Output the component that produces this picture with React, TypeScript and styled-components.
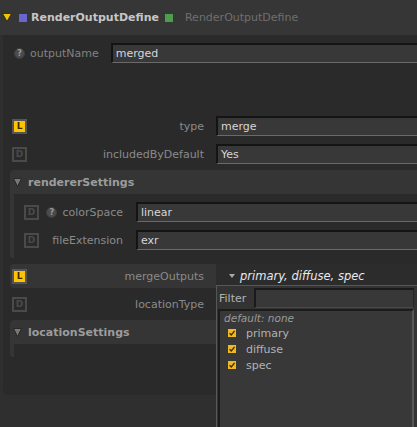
import React from 'react';
import styled, { createGlobalStyle } from 'styled-components';

const GlobalStyle = createGlobalStyle`
  html, body {
    margin: 0;
    padding: 0;
    background: #2f2f2f;
  }
  body {
    font-family: 'DejaVu Sans', Verdana, sans-serif;
    font-size: 11px;
  }
`;

const Root = styled.div`
  position: relative;
  width: 417px;
  height: 427px;
  overflow: hidden;
  background: #2f2f2f;
`;

//-------------------------------- Header -----------------------

const Header = styled.div`
  display: flex;
  align-items: center;
  height: 35px;
  padding-left: 2px;
  box-sizing: border-box;
  background: #363636;
`;

const Square = styled.span<{ $color: string }>`
  width: 8px;
  height: 8px;
  flex-shrink: 0;
  background: ${(p) => p.$color};
`;

const NodeName = styled.span`
  margin: 0 6px 0 4px;
  font-weight: bold;
  color: #c6c6c6;
`;

const NodeType = styled.span`
  margin-left: 12px;
  color: #6f6f6f;
`;

//-------------------------------- Panel -----------------------

const Panel = styled.div`
  height: 360px;
  margin-left: 3px;
  padding-top: 8px;
  box-sizing: border-box;
  background: #2a2a2a;
  border-bottom-left-radius: 4px;
`;

const NameRow = styled.div`
  display: flex;
  align-items: center;
  height: 20px;
  padding-left: 11px;
`;

const Spacer = styled.div`
  height: 51px;
`;

const HelpIcon = styled.span`
  display: flex;
  align-items: center;
  justify-content: center;
  width: 11px;
  height: 11px;
  flex-shrink: 0;
  box-sizing: border-box;
  border: 1px solid #3e3e3e;
  border-radius: 50%;
  background: #4b4b4b;
  color: #9a9a9a;
  font-size: 8px;
  font-weight: bold;
`;

const NameLabel = styled.span`
  margin: 0 12px 0 5px;
  color: #828282;
`;

const Field = styled.div`
  flex: 1;
  height: 20px;
  box-sizing: border-box;
  padding-left: 3px;
  line-height: 17px;
  background: #383838;
  border-top: 2px solid #141414;
  border-left: 2px solid #141414;
  border-bottom: 1px solid #6a6a6a;
  color: #d6d6d6;
  white-space: nowrap;
`;

const ParamRow = styled.div<{ $highlight?: boolean }>`
  display: flex;
  align-items: center;
  height: 24px;
  margin: 0 0 4px 7px;
  padding-left: 2px;
  background: ${(p) => (p.$highlight ? '#353535' : 'transparent')};
  border-radius: 4px 0 0 4px;
`;

const Badge = styled.span<{ $locked?: boolean }>`
  display: flex;
  align-items: center;
  justify-content: center;
  width: 15px;
  height: 15px;
  flex-shrink: 0;
  box-sizing: border-box;
  border: 2px solid ${(p) => (p.$locked ? '#555555' : '#4a4a4a')};
  background: ${(p) => (p.$locked ? '#ffc300' : 'transparent')};
  color: ${(p) => (p.$locked ? '#3a2c00' : '#4a4a4a')};
  font-size: 9px;
  font-weight: bold;
`;

const Label = styled.span`
  width: 177px;
  margin-right: 12px;
  text-align: right;
  color: #8a8a8a;
  white-space: nowrap;
`;

//-------------------------------- Groups -----------------------

const Group = styled.div<{ $gap: number }>`
  margin: 0 0 ${(p) => p.$gap}px 7px;
`;

const GroupHeader = styled.div`
  display: flex;
  align-items: center;
  gap: 6px;
  height: 24px;
  padding-left: 3px;
  background: #353535;
  border-top-left-radius: 4px;
  color: #9c9c9c;
  font-weight: bold;
`;

const GroupBody = styled.div<{ $empty?: boolean }>`
  min-height: ${(p) => (p.$empty ? '13px' : '0')};
  padding: ${(p) => (p.$empty ? '0' : '6px 0 6px 10px')};
  border-left: 4px solid #353535;
  border-bottom-left-radius: 3px;
`;

const GroupRow = styled.div`
  display: flex;
  align-items: center;
  height: 24px;
  & + & {
    margin-top: 4px;
  }
`;

const GroupLabel = styled.span`
  display: flex;
  align-items: center;
  justify-content: flex-end;
  gap: 5px;
  width: 84px;
  margin-right: 13px;
  color: #8a8a8a;
  white-space: nowrap;
`;

//-------------------------------- Dropdown -----------------------

const DropButton = styled.div`
  display: flex;
  align-items: center;
  gap: 5px;
  flex: 1;
  align-self: stretch;
  padding-left: 13px;
  background: #2c2c2c;
  color: #e8e9f0;
  font-size: 11.5px;
  font-style: italic;
  white-space: nowrap;
`;

const Popup = styled.div`
  position: absolute;
  left: 216px;
  top: 285px;
  width: 201px;
  height: 150px;
  box-sizing: border-box;
  padding: 1px 3px 0 1px;
  background: #333333;
  border-top: 1px solid #575757;
  border-left: 1px solid #575757;
`;

const FilterRow = styled.div`
  display: flex;
  align-items: center;
  height: 22px;
  padding-left: 1px;
`;

const FilterLabel = styled.span`
  width: 35px;
  color: #b4b4b4;
`;

const FilterInput = styled.div`
  flex: 1;
  height: 20px;
  box-sizing: border-box;
  background: #383838;
  border-top: 2px solid #1a1a1a;
  border-left: 2px solid #1a1a1a;
  border-right: 1px solid #262626;
  border-bottom: 1px solid #4a4a4a;
`;

const ListBox = styled.div`
  height: 130px;
  padding-left: 4px;
  box-sizing: border-box;
  background: #383838;
  border-top: 2px solid #1c1c1c;
  border-left: 2px solid #1c1c1c;
  border-right: 2px solid #565656;
`;

const DefaultNote = styled.div`
  height: 14px;
  line-height: 14px;
  color: #9a9a9a;
  font-size: 10.5px;
  font-style: italic;
`;

const CheckItem = styled.div`
  display: flex;
  align-items: center;
  gap: 10px;
  height: 16px;
  padding-left: 4px;
  color: #b2b2b2;
`;

const Arrow = ({ fill, w = 8, h = 8 }: { fill: string; w?: number; h?: number }) => (
  <svg width={w} height={h} viewBox={`0 0 ${w} ${h}`} style={{ flexShrink: 0 }}>
    <polygon points={`0.5,0.5 ${w - 0.5},0.5 ${w / 2},${h - 0.5}`} fill={fill} stroke="#1e1e1e" strokeWidth="0.8" />
  </svg>
);

const Check = () => (
  <svg width="8" height="8" viewBox="0 0 8 8" style={{ flexShrink: 0 }}>
    <rect width="8" height="8" fill="#f2b81c" />
    <path d="M1.6 4.2 L3.3 6 L6.6 1.8" fill="none" stroke="#3a2e00" strokeWidth="1.3" />
  </svg>
);

const outputs = ['primary', 'diffuse', 'spec'];

const App = () => {
  return (
    <Root>
      <GlobalStyle />
      <Header>
        <span style={{ marginRight: 7, display: 'flex' }}>
          <Arrow fill="#f5c400" w={10} h={9} />
        </span>
        <Square $color="#6767cc" />
        <NodeName>RenderOutputDefine</NodeName>
        <Square $color="#4c9e4c" />
        <NodeType>RenderOutputDefine</NodeType>
      </Header>

      <Panel>
        <NameRow>
          <HelpIcon>?</HelpIcon>
          <NameLabel>outputName</NameLabel>
          <Field>merged</Field>
        </NameRow>
        <Spacer />

        <ParamRow>
          <Badge $locked>L</Badge>
          <Label>type</Label>
          <Field>merge</Field>
        </ParamRow>
        <ParamRow>
          <Badge>D</Badge>
          <Label>includedByDefault</Label>
          <Field>Yes</Field>
        </ParamRow>

        <Group $gap={6}>
          <GroupHeader>
            <Arrow fill="#767676" w={9} h={9} />
            rendererSettings
          </GroupHeader>
          <GroupBody>
            <GroupRow>
              <Badge>D</Badge>
              <GroupLabel>
                <HelpIcon>?</HelpIcon>
                colorSpace
              </GroupLabel>
              <Field>linear</Field>
            </GroupRow>
            <GroupRow>
              <Badge>D</Badge>
              <GroupLabel>fileExtension</GroupLabel>
              <Field>exr</Field>
            </GroupRow>
          </GroupBody>
        </Group>

        <ParamRow $highlight>
          <Badge $locked>L</Badge>
          <Label>mergeOutputs</Label>
          <DropButton>
            <svg width="6" height="4" viewBox="0 0 6 4">
              <polygon points="0,0 6,0 3,4" fill="#a8a8a8" />
            </svg>
            primary, diffuse, spec
          </DropButton>
        </ParamRow>
        <ParamRow>
          <Badge>D</Badge>
          <Label>locationType</Label>
        </ParamRow>

        <Group $gap={0}>
          <GroupHeader>
            <Arrow fill="#767676" w={9} h={9} />
            locationSettings
          </GroupHeader>
          <GroupBody $empty />
        </Group>
      </Panel>

      <Popup>
        <FilterRow>
          <FilterLabel>Filter</FilterLabel>
          <FilterInput />
        </FilterRow>
        <ListBox>
          <DefaultNote>default: none</DefaultNote>
          {outputs.map((name) => (
            <CheckItem key={name}>
              <Check />
              {name}
            </CheckItem>
          ))}
        </ListBox>
      </Popup>
    </Root>
  );
};

export default App;
